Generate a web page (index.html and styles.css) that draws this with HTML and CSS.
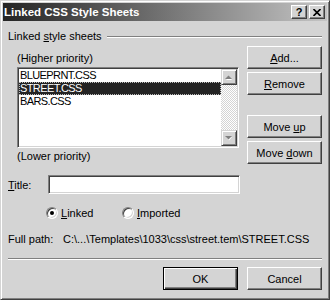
FILE: index.html
```html
<!DOCTYPE html>
<html lang="en">
<head>
    <meta charset="UTF-8">
    <title>Linked CSS Style Sheets</title>
    <link rel="stylesheet" href="styles.css">
</head>
<body>
    <div class="dialog">
        <div class="titlebar">
            <span class="title">Linked CSS Style Sheets</span>
            <div class="caption-btns">
                <button class="cap-btn">?</button>
                <button class="cap-btn">
                    <svg width="8" height="7" viewBox="0 0 8 7">
                        <path d="M0.5 0 L7.5 7 M7.5 0 L0.5 7" stroke="#000" stroke-width="1.6" fill="none"/>
                    </svg>
                </button>
            </div>
        </div>

        <div class="content">
            <div class="group-head">
                <span>Linked <u>s</u>tyle sheets</span>
                <span class="etch"></span>
            </div>

            <div class="main">
                <div class="list-col">
                    <div class="note first">(Higher priority)</div>
                    <div class="listbox">
                        <ul class="items">
                            <li>BLUEPRNT.CSS</li>
                            <li class="selected">STREET.CSS</li>
                            <li>BARS.CSS</li>
                        </ul>
                        <div class="scrollbar">
                            <div class="arrow">
                                <svg width="8" height="5" viewBox="0 0 8 5">
                                    <path d="M1 5 L4 2 L7 5 Z" fill="#fff"/>
                                    <path d="M0 4 L3.5 0.5 L7 4 Z" fill="#808080"/>
                                </svg>
                            </div>
                            <div class="track"></div>
                            <div class="arrow">
                                <svg width="8" height="5" viewBox="0 0 8 5">
                                    <path d="M1 1 L4 4.5 L7 1 Z" fill="#fff"/>
                                    <path d="M0 0 L3.5 3.5 L7 0 Z" fill="#808080"/>
                                </svg>
                            </div>
                        </div>
                    </div>
                    <div class="note">(Lower priority)</div>
                </div>

                <div class="btn-col">
                    <button class="btn add"><u>A</u>dd...</button>
                    <button class="btn remove"><u>R</u>emove</button>
                    <button class="btn move-up">Move <u>u</u>p</button>
                    <button class="btn move-down">Move <u>d</u>own</button>
                </div>
            </div>

            <div class="title-row">
                <label class="title-label"><u>T</u>itle:</label>
                <div class="field"></div>
            </div>

            <div class="radio-row">
                <label class="radio linked"><span class="circle checked"></span><u>L</u>inked</label>
                <label class="radio"><span class="circle"></span><u>I</u>mported</label>
            </div>

            <div class="path-row">
                <span class="path-label">Full path:</span>
                <span>C:\...\Templates\1033\css\street.tem\STREET.CSS</span>
            </div>

            <div class="separator"></div>

            <footer class="footer">
                <button class="btn default">OK</button>
                <button class="btn">Cancel</button>
            </footer>
        </div>
    </div>
</body>
</html>
```

FILE: styles.css
```css
body {
    margin: 0;
    font-family: "Liberation Sans", Arial, sans-serif;
    font-size: 11px;
    color: #000;
    background: #d4d4d4;
}

.dialog {
    width: 330px;
    height: 300px;
    box-sizing: border-box;
    background: #d4d4d4;
    border: 1px solid;
    border-color: #d4d4d4 #404040 #404040 #d4d4d4;
    box-shadow: inset 1px 1px #fff, inset -1px -1px #808080;
    padding: 2px;
    display: flex;
    flex-direction: column;
}

/* title bar */
.titlebar {
    height: 18px;
    display: flex;
    align-items: center;
    padding: 0 2px 0 1px;
    background: linear-gradient(to right, #242424, #c4c4c4);
}
.title {
    color: #fff;
    font-weight: bold;
    font-size: 11.5px;
}
.caption-btns {
    margin-left: auto;
    display: flex;
    gap: 2px;
}
.cap-btn {
    width: 16px;
    height: 14px;
    box-sizing: border-box;
    padding: 0;
    border: 1px solid;
    border-color: #fff #404040 #404040 #fff;
    box-shadow: inset -1px -1px #808080;
    background: #d4d4d4;
    font-family: "Liberation Sans", Arial, sans-serif;
    font-weight: bold;
    font-size: 11px;
    line-height: 11px;
    display: flex;
    align-items: center;
    justify-content: center;
}

.content {
    flex: 1;
    padding: 0 5px;
    display: flex;
    flex-direction: column;
}

/* group header */
.group-head {
    margin-top: 9px;
    height: 13px;
    line-height: 13px;
    display: flex;
    align-items: center;
}
.etch {
    flex: 1;
    margin-left: 5px;
    border-top: 1px solid #808080;
    border-bottom: 1px solid #fff;
}

.main {
    display: flex;
    margin-top: 2px;
}
.list-col {
    margin-left: 9px;
    width: 222px;
}
.note {
    line-height: 13px;
    margin-top: 2px;
}
.note.first {
    margin-top: 7px;
}

.listbox {
    margin-top: 2px;
    height: 81px;
    box-sizing: border-box;
    border: 1px solid;
    border-color: #808080 #fff #fff #808080;
    box-shadow: inset 1px 1px #404040, inset -1px -1px #d4d4d4;
    padding: 1px;
    background: #fff;
    display: flex;
}
.items {
    flex: 1;
    list-style: none;
    margin: 0;
    padding: 0;
}
.items li {
    height: 13px;
    line-height: 13px;
    padding-left: 1px;
    letter-spacing: -0.6px;
}
.items li.selected {
    background: #242424;
    color: #fff;
    outline: 1px dotted #bbb;
    outline-offset: -1px;
}

.scrollbar {
    width: 16px;
    display: flex;
    flex-direction: column;
}
.track {
    flex: 1;
    background-image: conic-gradient(#fff 25%, #d4d4d4 0 50%, #fff 0 75%, #d4d4d4 0);
    background-size: 2px 2px;
}
.arrow {
    height: 16px;
    box-sizing: border-box;
    border: 1px solid;
    border-color: #d4d4d4 #404040 #404040 #d4d4d4;
    box-shadow: inset 1px 1px #fff, inset -1px -1px #808080;
    background: #d4d4d4;
    display: flex;
    align-items: center;
    justify-content: center;
}

/* buttons */
.btn-col {
    margin-left: auto;
    display: flex;
    flex-direction: column;
}
.btn {
    width: 75px;
    height: 23px;
    box-sizing: border-box;
    padding: 0;
    border: 1px solid;
    border-color: #fff #404040 #404040 #fff;
    box-shadow: inset -1px -1px #808080;
    background: #d4d4d4;
    font-family: inherit;
    font-size: 11px;
    color: #000;
}
.btn.default {
    border-color: #000;
    box-shadow: inset 1px 1px #fff, inset -1px -1px #404040, inset -2px -2px #808080;
}
.add { margin-top: 1px; }
.remove { margin-top: 3px; }
.move-up { margin-top: 20px; }
.move-down { margin-top: 3px; }

/* title field */
.title-row {
    margin-top: 11px;
    display: flex;
    align-items: center;
}
.title-label {
    width: 40px;
}
.field {
    width: 192px;
    height: 19px;
    box-sizing: border-box;
    border: 1px solid;
    border-color: #808080 #fff #fff #808080;
    box-shadow: inset 1px 1px #404040, inset -1px -1px #d4d4d4;
    background: #fff;
}

/* radios */
.radio-row {
    margin-top: 12px;
    padding-left: 38px;
    display: flex;
    height: 13px;
    align-items: center;
}
.radio {
    display: flex;
    align-items: center;
}
.radio.linked {
    width: 76px;
}
.circle {
    width: 12px;
    height: 12px;
    box-sizing: border-box;
    border-radius: 50%;
    border: 1px solid;
    border-color: #808080 #fff #fff #808080;
    box-shadow: inset 1px 1px #404040, inset -1px -1px #d4d4d4;
    background: #fff;
    margin-right: 3px;
    display: flex;
    align-items: center;
    justify-content: center;
}
.circle.checked::after {
    content: "";
    width: 4px;
    height: 4px;
    border-radius: 50%;
    background: #000;
}

.path-row {
    margin-top: 14px;
    line-height: 13px;
    display: flex;
}
.path-label {
    width: 55px;
}

.separator {
    margin-top: 12px;
    border-top: 1px solid #808080;
    border-bottom: 1px solid #fff;
}

.footer {
    margin-top: 7px;
    display: flex;
    justify-content: flex-end;
    gap: 9px;
}
```
